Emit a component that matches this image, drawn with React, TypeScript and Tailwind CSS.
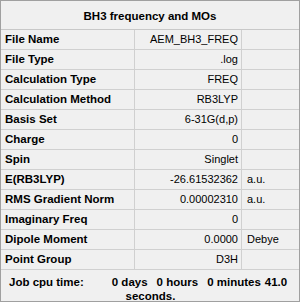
import React from 'react';

type Row = { label: string; value: string; unit?: string };

const rows: Row[] = [
  { label: 'File Name', value: 'AEM_BH3_FREQ' },
  { label: 'File Type', value: '.log' },
  { label: 'Calculation Type', value: 'FREQ' },
  { label: 'Calculation Method', value: 'RB3LYP' },
  { label: 'Basis Set', value: '6-31G(d,p)' },
  { label: 'Charge', value: '0' },
  { label: 'Spin', value: 'Singlet' },
  { label: 'E(RB3LYP)', value: '-26.61532362', unit: 'a.u.' },
  { label: 'RMS Gradient Norm', value: '0.00002310', unit: 'a.u.' },
  { label: 'Imaginary Freq', value: '0' },
  { label: 'Dipole Moment', value: '0.0000', unit: 'Debye' },
  { label: 'Point Group', value: 'D3H' },
];

export default function App() {
  return (
    <div
      className="w-[300px] h-[302px] border border-[#a0a0a0] bg-[#f0f0f0] text-black flex flex-col"
      style={{ fontFamily: '"Liberation Sans", Arial, sans-serif' }}
    >
      <div className="h-[29px] shrink-0 flex items-center justify-center border-b border-[#c8c8c8] text-[11.5px] font-bold pt-[3px]">
        BH3 frequency and MOs
      </div>

      <div className="grid grid-cols-[134px_107px_1fr]">
        {rows.map((r) => (
          <React.Fragment key={r.label}>
            <div className="h-[20px] flex items-center pl-[4px] border-r border-b border-[#d0d0d0] text-[11.5px] font-bold">
              {r.label}
            </div>
            <div className="h-[20px] flex items-center justify-end pr-[3px] border-r border-b border-[#d0d0d0] text-[11px]">
              {r.value}
            </div>
            <div className="h-[20px] flex items-center pl-[5px] border-b border-[#d0d0d0] text-[11px]">
              {r.unit ?? ''}
            </div>
          </React.Fragment>
        ))}
      </div>

      {/* cpu time summary, wrapped over two centred lines */}
      <div className="flex-1 flex flex-col pt-[5px] text-[11.5px] font-bold leading-[14px]">
        <div className="flex pl-[8px]">
          <span>Job cpu time:</span>
          <span className="ml-[28px]">0 days</span>
          <span className="ml-[9px]">0 hours</span>
          <span className="ml-[9px]">0 minutes</span>
          <span className="ml-[4px]">41.0</span>
        </div>
        <div className="text-center pl-[1px]">seconds.</div>
      </div>
    </div>
  );
}
